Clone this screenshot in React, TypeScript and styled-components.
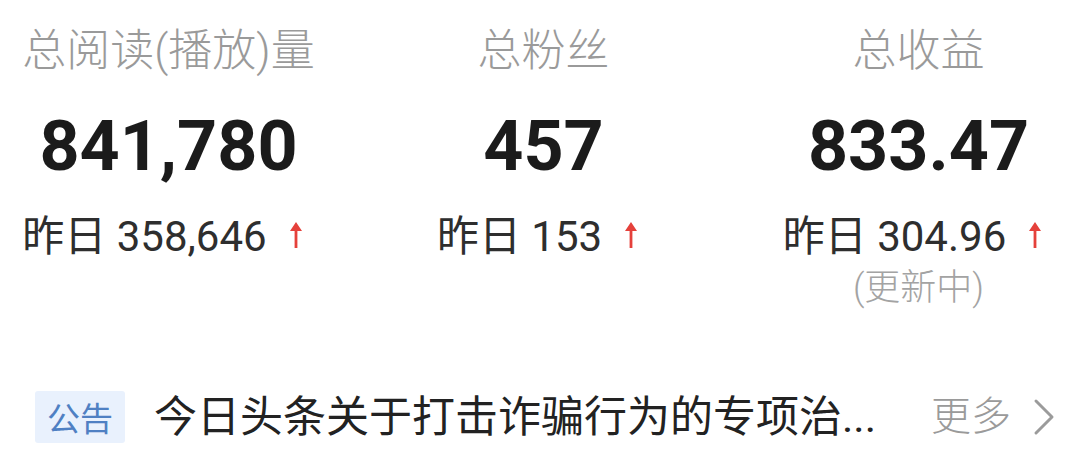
import React from "react";
import styled, { createGlobalStyle } from "styled-components";

interface StatItem {
  title: string;
  value: string;
  yesterday: string;
  note?: string;
}

const stats: StatItem[] = [
  { title: "总阅读(播放)量", value: "841,780", yesterday: "358,646" },
  { title: "总粉丝", value: "457", yesterday: "153" },
  { title: "总收益", value: "833.47", yesterday: "304.96", note: "(更新中)" },
];

const GlobalStyle = createGlobalStyle`
  html, body {
    margin: 0;
    padding: 0;
    background: #ffffff;
    overflow: hidden;
  }
  body {
    font-family: Roboto, "Noto Sans CJK SC", sans-serif;
  }
`;

// 红色上升箭头
const UpArrow = () => (
  <ArrowSvg viewBox="0 0 14 28" width="14" height="28">
    <path d="M7 1 L13 10 L8.4 10 L8.4 27 L5.6 27 L5.6 10 L1 10 Z" fill="#e5413b" />
  </ArrowSvg>
);

const Chevron = () => (
  <ChevronSvg viewBox="0 0 22 38" width="22" height="38">
    <path d="M3 3 L19 19 L3 35" fill="none" stroke="#9b9b9b" strokeWidth="3" strokeLinecap="round" strokeLinejoin="round" />
  </ChevronSvg>
);

const App = () => {
  return (
    <Page>
      <GlobalStyle />
      <StatsRow>
        {stats.map((s) => (
          <StatColumn key={s.title}>
            <StatTitle>{s.title}</StatTitle>
            <StatValue>{s.value}</StatValue>
            <Yesterday>
              昨日 {s.yesterday}
              <UpArrow />
            </Yesterday>
            {s.note && <Note>{s.note}</Note>}
          </StatColumn>
        ))}
      </StatsRow>
      <NoticeRow>
        <Badge>公告</Badge>
        <NoticeText>今日头条关于打击诈骗行为的专项治...</NoticeText>
        <More>更多</More>
        <Chevron />
      </NoticeRow>
    </Page>
  );
};

const Page = styled.div`
  width: 1080px;
  height: 470px;
  display: flex;
  flex-direction: column;
`;

const StatsRow = styled.div`
  display: grid;
  grid-template-columns: repeat(3, 375px);
  align-items: start;
  margin-left: -19px;
  padding-top: 29px;
`;

const StatColumn = styled.div`
  display: flex;
  flex-direction: column;
  align-items: center;
`;

const StatTitle = styled.div`
  font-size: 44px;
  line-height: 44px;
  font-weight: 300;
  color: #9a9a9a;
  white-space: nowrap;
`;

const StatValue = styled.div`
  margin-top: 38px;
  font-size: 70px;
  line-height: 70px;
  font-weight: 700;
  color: #1b1b1b;
  white-space: nowrap;
`;

const Yesterday = styled.div`
  display: flex;
  align-items: center;
  margin-top: 35px;
  margin-right: 12px;
  font-size: 42px;
  line-height: 42px;
  color: #2e2e2e;
  white-space: pre;
`;

const ArrowSvg = styled.svg`
  margin-left: 22px;
  margin-bottom: 4px;
`;

const Note = styled.div`
  margin-top: 12px;
  font-size: 36px;
  line-height: 36px;
  font-weight: 300;
  color: #a3a3a3;
  white-space: nowrap;
`;

const NoticeRow = styled.div`
  display: flex;
  align-items: center;
  margin-top: 85px;
  padding-left: 35px;
`;

const Badge = styled.div`
  width: 90px;
  height: 52px;
  display: flex;
  align-items: center;
  justify-content: center;
  background: #e9f1fd;
  border-radius: 3px;
  font-size: 33px;
  color: #4f80c3;
`;

const NoticeText = styled.div`
  margin-left: 29px;
  font-size: 43px;
  line-height: 52px;
  color: #222222;
  white-space: nowrap;
`;

const More = styled.div`
  margin-left: auto;
  margin-right: 22px;
  font-size: 40px;
  line-height: 52px;
  font-weight: 300;
  color: #9a9a9a;
`;

const ChevronSvg = styled.svg`
  margin-right: 25px;
`;

export default App;
